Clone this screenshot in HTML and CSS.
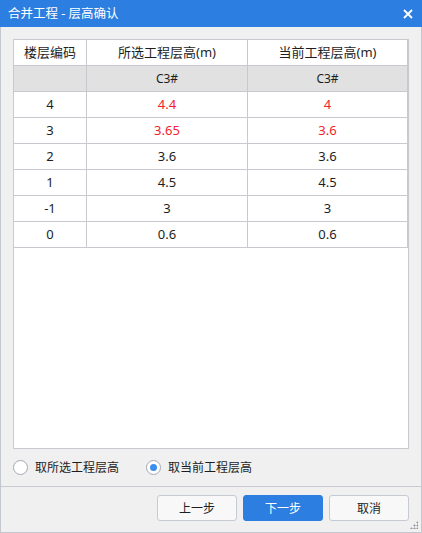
FILE: index.html
```html
<!DOCTYPE html>
<html lang="zh-CN">
<head>
<meta charset="utf-8">
<title>合并工程 - 层高确认</title>
<link rel="stylesheet" href="styles.css">
</head>
<body>
<div class="window">
  <div class="titlebar">
    <span class="title">合并工程 - 层高确认</span>
    <svg class="close" width="10" height="10" viewBox="0 0 10 10"><path d="M1 1 L9 9 M9 1 L1 9" stroke="#fff" stroke-width="1.8" fill="none"/></svg>
  </div>
  <div class="content">
    <div class="tablebox">
      <table class="grid">
        <colgroup><col class="c1"><col class="c2"><col class="c3"></colgroup>
        <tr class="head"><td>楼层编码</td><td>所选工程层高(m)</td><td>当前工程层高(m)</td></tr>
        <tr class="sub"><td></td><td>C3#</td><td>C3#</td></tr>
        <tr><td>4</td><td class="red">4.4</td><td class="red">4</td></tr>
        <tr><td>3</td><td class="red">3.65</td><td class="red">3.6</td></tr>
        <tr><td>2</td><td>3.6</td><td>3.6</td></tr>
        <tr><td>1</td><td>4.5</td><td>4.5</td></tr>
        <tr><td>-1</td><td>3</td><td>3</td></tr>
        <tr><td>0</td><td>0.6</td><td>0.6</td></tr>
      </table>
    </div>
    <div class="radios">
      <label class="radio"><span class="dot"></span>取所选工程层高</label>
      <label class="radio checked"><span class="dot"></span>取当前工程层高</label>
    </div>
  </div>
  <div class="footer">
    <button class="btn">上一步</button>
    <button class="btn primary">下一步</button>
    <button class="btn">取消</button>
    <span class="grip"></span>
  </div>
</div>
</body>
</html>
```
FILE: styles.css
```css
html, body { margin: 0; padding: 0; }
body {
  font-family: "Noto Sans", "Noto Sans CJK SC", sans-serif;
  color: #1e1e1e;
  background: #f0f0f0;
}
.window {
  width: 422px;
  height: 533px;
  box-sizing: border-box;
  border: 1px solid #c3c7ce;
  border-top: none;
  background: #f0f0f0;
  display: flex;
  flex-direction: column;
  position: relative;
}
.titlebar {
  height: 27px;
  margin: 0 -1px;
  background: #2c7fe0;
  display: flex;
  align-items: center;
  justify-content: space-between;
  padding: 0 9px 0 8px;
  color: #fff;
}
.title { font-size: 12.5px; line-height: 16px; }
.close { display: block; }
.content {
  padding: 12px 12px 0 12px;
  flex: 1;
  display: flex;
  flex-direction: column;
}
.tablebox {
  height: 410px;
  box-sizing: border-box;
  border: 1px solid #c8c9ce;
  background: #fff;
}
.grid {
  border-collapse: separate;
  border-spacing: 0;
  width: 394px;
  table-layout: fixed;
  font-size: 13px;
}
.c1 { width: 73px; }
.c2 { width: 161px; }
.c3 { width: 160px; }
.grid td {
  height: 25px;
  padding: 0;
  line-height: 25px;
  text-align: center;
  border-right: 1px solid #c8c9ce;
  border-bottom: 1px solid #c8c9ce;
  white-space: nowrap;
}
.grid .sub td { background: #e1e1e1; font-size: 12px; }
.grid .red { color: #f5222d; }
.radios {
  height: 36px;
  display: flex;
  align-items: center;
  gap: 27px;
  font-size: 12px;
}
.radio { display: flex; align-items: center; gap: 7px; }
.dot {
  width: 13px;
  height: 13px;
  border-radius: 50%;
  border: 1px solid #a3a8b0;
  background: #fff;
  position: relative;
}
.checked .dot::after {
  content: "";
  position: absolute;
  left: 3px; top: 3px;
  width: 7px; height: 7px;
  border-radius: 50%;
  background: #3a8ef0;
}
.footer {
  border-top: 1px solid #c8cbd1;
  height: 46px;
  box-sizing: border-box;
  padding: 8px 12px 0 0;
  display: flex;
  justify-content: flex-end;
  align-items: flex-start;
  gap: 6px;
}
.btn {
  width: 80px;
  height: 26px;
  border: 1px solid #c6cad4;
  border-radius: 3px;
  background: #f8f8f8;
  font-family: "Noto Sans", "Noto Sans CJK SC", sans-serif;
  font-size: 12px;
  color: #1e1e1e;
  padding: 0;
}
.btn.primary { background: #2c7fe0; border-color: #2c7fe0; color: #fff; }
.grip {
  position: absolute;
  right: 3px;
  bottom: 3px;
  width: 8px;
  height: 8px;
  background:
    radial-gradient(circle, #8c919a 0.9px, transparent 1.1px) 6px 0 / 3px 3px no-repeat,
    radial-gradient(circle, #8c919a 0.9px, transparent 1.1px) 3px 3px / 3px 3px no-repeat,
    radial-gradient(circle, #8c919a 0.9px, transparent 1.1px) 6px 3px / 3px 3px no-repeat,
    radial-gradient(circle, #8c919a 0.9px, transparent 1.1px) 0 6px / 3px 3px no-repeat,
    radial-gradient(circle, #8c919a 0.9px, transparent 1.1px) 3px 6px / 3px 3px no-repeat,
    radial-gradient(circle, #8c919a 0.9px, transparent 1.1px) 6px 6px / 3px 3px no-repeat;
}
```
